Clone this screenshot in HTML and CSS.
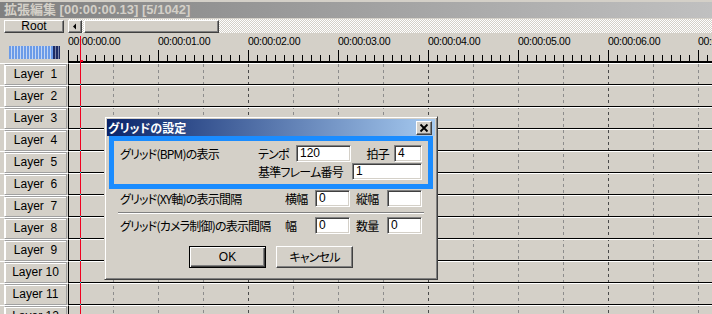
FILE: index.html
```html
<!DOCTYPE html>
<html lang="ja">
  <head>
    <meta charset="UTF-8" />
    <title>拡張編集</title>
    <link rel="stylesheet" href="styles.css">
  </head>
  <body>
    <div class="app">
      <div class="app-title">拡張編集 [00:00:00.13] [5/1042]</div>

      <!-- Root button and horizontal scroll -->
      <div class="toolbar">
        <div class="root-btn">Root</div>
        <div class="hscroll">
          <div class="arrow-btn">
            <svg width="12" height="11" viewBox="0 0 12 11"><path d="M4 5.5 L7 2.5 L7 8.5 Z" fill="#000"/></svg>
          </div>
          <div class="thumb"></div>
        </div>
      </div>

      <div class="editor">
        <!-- Layer names -->
        <div class="layers">
          <div class="zoom-box">
            <div class="meter"><span class="meter-on"></span><span class="meter-off"></span></div>
          </div>
          <div class="layer"><div class="layer-btn">Layer  1</div></div>
          <div class="layer"><div class="layer-btn">Layer  2</div></div>
          <div class="layer"><div class="layer-btn">Layer  3</div></div>
          <div class="layer"><div class="layer-btn">Layer  4</div></div>
          <div class="layer"><div class="layer-btn">Layer  5</div></div>
          <div class="layer"><div class="layer-btn">Layer  6</div></div>
          <div class="layer"><div class="layer-btn">Layer  7</div></div>
          <div class="layer"><div class="layer-btn">Layer  8</div></div>
          <div class="layer"><div class="layer-btn">Layer  9</div></div>
          <div class="layer"><div class="layer-btn">Layer 10</div></div>
          <div class="layer"><div class="layer-btn">Layer 11</div></div>
          <div class="layer"><div class="layer-btn">Layer 12</div></div>
        </div>

        <!-- Timeline -->
        <div class="timeline">
          <svg class="grid" width="644" height="281">
            <g stroke="#8c8c8c" stroke-dasharray="3 3">
              <line x1="45.5" y1="31" x2="45.5" y2="281"/>
              <line x1="90.5" y1="31" x2="90.5" y2="281"/>
              <line x1="135.5" y1="31" x2="135.5" y2="281"/>
              <line x1="225.5" y1="31" x2="225.5" y2="281"/>
              <line x1="270.5" y1="31" x2="270.5" y2="281"/>
              <line x1="315.5" y1="31" x2="315.5" y2="281"/>
              <line x1="405.5" y1="31" x2="405.5" y2="281"/>
              <line x1="450.5" y1="31" x2="450.5" y2="281"/>
              <line x1="495.5" y1="31" x2="495.5" y2="281"/>
              <line x1="585.5" y1="31" x2="585.5" y2="281"/>
              <line x1="630.5" y1="31" x2="630.5" y2="281"/>
            </g>
            <g stroke="#4a4a4a" stroke-dasharray="3 3">
              <line x1="180.5" y1="31" x2="180.5" y2="281"/>
              <line x1="360.5" y1="31" x2="360.5" y2="281"/>
              <line x1="540.5" y1="31" x2="540.5" y2="281"/>
            </g>
          </svg>

          <div class="ruler">
            <div class="ruler-labels">
              <span>00:00:00.00</span>
              <span>00:00:01.00</span>
              <span>00:00:02.00</span>
              <span>00:00:03.00</span>
              <span>00:00:04.00</span>
              <span>00:00:05.00</span>
              <span>00:00:06.00</span>
              <span>00:00:07.00</span>
            </div>
            <div class="ruler-ticks"></div>
          </div>

          <div class="track"></div>
          <div class="track"></div>
          <div class="track"></div>
          <div class="track"></div>
          <div class="track"></div>
          <div class="track"></div>
          <div class="track"></div>
          <div class="track"></div>
          <div class="track"></div>
          <div class="track"></div>
          <div class="track"></div>
          <div class="track"></div>

          <!-- current frame -->
          <svg class="cursor" width="644" height="281">
            <line x1="12.5" y1="3" x2="12.5" y2="281" stroke="#f00020"/>
            <rect x="12" y="27" width="3" height="2" fill="#f00020"/>
            <g fill="#00e0e0">
              <rect x="12" y="51" width="1" height="1"/>
              <rect x="12" y="73" width="1" height="1"/>
              <rect x="12" y="95" width="1" height="1"/>
              <rect x="12" y="117" width="1" height="1"/>
              <rect x="12" y="139" width="1" height="1"/>
              <rect x="12" y="161" width="1" height="1"/>
              <rect x="12" y="183" width="1" height="1"/>
              <rect x="12" y="205" width="1" height="1"/>
              <rect x="12" y="227" width="1" height="1"/>
              <rect x="12" y="249" width="1" height="1"/>
              <rect x="12" y="271" width="1" height="1"/>
            </g>
          </svg>
        </div>
      </div>

      <!-- Grid settings dialog -->
      <div class="dialog">
        <div class="dlg-title">
          <span class="jp">グリッドの設定</span>
          <div class="close-btn">
            <svg width="14" height="12" viewBox="0 0 14 12"><path d="M3.5 2.5 L10.5 9.5 M10.5 2.5 L3.5 9.5" stroke="#000" stroke-width="1.8"/></svg>
          </div>
        </div>

        <div class="bpm-box">
          <div class="row">
            <span class="jp lbl-main">グリッド(BPM)の表示</span>
            <span class="jp lbl-tempo">テンポ</span>
            <div class="field w-tempo">120</div>
            <span class="jp lbl-beat">拍子</span>
            <div class="field w-beat">4</div>
          </div>
          <div class="row row-2">
            <span class="lbl-main"></span>
            <span class="jp lbl-base">基準フレーム番号</span>
            <div class="field w-base">1</div>
          </div>
        </div>

        <div class="row row-pad row-xy">
          <span class="jp lbl-long">グリッド(XY軸)の表示間隔</span>
          <span class="jp lbl-small">横幅</span>
          <div class="field w-small">0</div>
          <span class="jp lbl-small2">縦幅</span>
          <div class="field w-small"></div>
        </div>

        <div class="separator"></div>

        <div class="row row-pad row-cam">
          <span class="jp lbl-long">グリッド(カメラ制御)の表示間隔</span>
          <span class="jp lbl-small">幅</span>
          <div class="field w-small">0</div>
          <span class="jp lbl-small2">数量</span>
          <div class="field w-small">0</div>
        </div>

        <div class="buttons">
          <div class="btn btn-default">OK</div>
          <div class="btn jp">キャンセル</div>
        </div>
      </div>
    </div>
  </body>
</html>
```

FILE: styles.css
```css
/* Basic styling */
* {
  margin: 0;
  padding: 0;
  box-sizing: border-box;
}
body {
  background-color: #d4d0c8;
  color: #000;
  font-family: "Liberation Sans", "Noto Sans CJK JP", sans-serif;
  font-size: 12px;
  overflow: hidden;
}
.jp {
  font-family: "Noto Sans CJK JP", sans-serif;
  font-feature-settings: "palt";
  font-size: 12px;
  letter-spacing: -0.8px;
}
.app {
  position: relative;
  width: 712px;
  height: 314px;
  overflow: hidden;
}
.app-title {
  margin-top: 2px;
  height: 16px;
  padding-left: 4px;
  background: linear-gradient(90deg, #808080, #c0c0c0);
  color: #d4d0c8;
  font-family: "Liberation Sans", "Noto Sans CJK JP", sans-serif;
  font-weight: bold;
  font-size: 13px;
  line-height: 16px;
  white-space: nowrap;
}

/* toolbar */
.toolbar {
  display: flex;
  height: 14px;
  margin-top: 1px;
}
.root-btn {
  flex: none;
  width: 60px;
  height: 13px;
  margin: 1px 0 0 4px;
  border: 1px solid;
  border-color: #fff #404040 #404040 #fff;
  box-shadow: inset -1px -1px #808080;
  text-align: center;
  line-height: 11px;
}
.hscroll {
  flex: 1;
  display: flex;
  align-items: flex-start;
  margin-left: 4px;
  padding-top: 1px;
  background: repeating-conic-gradient(#fff 0 25%, #d4d0c8 0 50%) 0 0 / 2px 2px;
}
.arrow-btn,
.thumb {
  flex: none;
  height: 13px;
  background-color: #d4d0c8;
  border: 1px solid;
  border-color: #fff #404040 #404040 #fff;
  box-shadow: inset -1px -1px #808080;
}
.arrow-btn {
  width: 14px;
  display: flex;
}
.thumb {
  width: 135px;
  margin-left: 2px;
}

/* editor */
.editor {
  display: flex;
}
.layers {
  flex: none;
  width: 68px;
}
.zoom-box {
  height: 30px;
  padding: 13px 0 0 9px;
}
.meter {
  display: flex;
  width: 51px;
  height: 13px;
}
.meter-on {
  flex: 1;
  background: repeating-linear-gradient(90deg, #6b9be8 0 2px, #c5d6f2 2px 3px);
}
.meter-off {
  width: 7px;
  background: repeating-linear-gradient(90deg, #1e2c64 0 2px, #7d86a8 2px 3px);
}
.layer {
  height: 22px;
  padding-left: 4px;
  border-top: 1px solid #fff;
}
.layer-btn {
  height: 21px;
  margin-right: 1px;
  border: 1px solid #a0a0a0;
  border-left-color: #fff;
  box-shadow: inset 1px 1px #fff;
  text-align: center;
  line-height: 19px;
  white-space: pre;
}

/* timeline */
.timeline {
  position: relative;
  flex: 1;
  min-width: 0;
  overflow: hidden;
}
.grid {
  position: absolute;
  left: 0;
  top: 0;
  z-index: 0;
}
.cursor {
  position: absolute;
  left: 0;
  top: 0;
  z-index: 2;
}
.ruler {
  position: relative;
  z-index: 1;
  height: 30px;
}
.ruler-labels {
  display: flex;
  height: 17px;
  padding-top: 2px;
  font-size: 10.5px;
  line-height: 12px;
  white-space: nowrap;
  letter-spacing: -0.3px;
}
.ruler-labels span {
  flex: none;
  width: 90px;
}
.ruler-ticks {
  height: 13px;
  border-bottom: 2px solid #000;
  background:
    repeating-linear-gradient(90deg, #000 0 1px, transparent 1px 90px),
    repeating-linear-gradient(90deg, #000 0 1px, transparent 1px 9px) 0 5px / 100% 6px no-repeat;
}
.track {
  position: relative;
  z-index: 1;
  height: 22px;
  border-top: 1px solid #fff;
  border-bottom: 1px solid #000;
  border-left: 1px solid #000;
}

/* dialog */
.dialog {
  position: absolute;
  left: 104px;
  top: 116px;
  z-index: 5;
  width: 334px;
  height: 164px;
  padding: 2px;
  background-color: #d4d0c8;
  border: 1px solid;
  border-color: #d4d0c8 #404040 #404040 #d4d0c8;
  box-shadow: inset 1px 1px #fff, inset -1px -1px #808080;
}
.dlg-title {
  display: flex;
  justify-content: space-between;
  align-items: center;
  height: 17px;
  padding: 0 3px 0 1px;
  background: linear-gradient(90deg, #0a246a, #a6caf0);
  color: #fff;
  font-weight: bold;
}
.dlg-title .jp {
  font-size: 12px;
  letter-spacing: 0;
}
.close-btn {
  width: 16px;
  height: 14px;
  background-color: #d4d0c8;
  border: 1px solid;
  border-color: #fff #404040 #404040 #fff;
  box-shadow: inset -1px -1px #808080;
  display: flex;
}
.bpm-box {
  height: 53px;
  margin: 0 2px;
  padding: 4px 0 0 6px;
  border: 5px solid #1a8cff;
}
.row {
  display: flex;
  align-items: center;
  height: 17px;
  white-space: nowrap;
}
.row-2 {
  margin-top: 1px;
}
.row-pad {
  padding-left: 13px;
}
.row-xy {
  margin-top: 1px;
}
.row-cam {
  margin-top: 3px;
}
.lbl-main {
  flex: none;
  width: 138px;
}
.lbl-tempo {
  flex: none;
  width: 38px;
}
.lbl-beat {
  flex: none;
  width: 43px;
  text-align: right;
  padding-right: 5px;
}
.lbl-base {
  flex: none;
  width: 94px;
}
.lbl-long {
  flex: none;
  width: 165px;
}
.lbl-small {
  flex: none;
  width: 30px;
}
.lbl-small2 {
  flex: none;
  width: 37px;
  padding-left: 6px;
}
.field {
  flex: none;
  height: 17px;
  padding-left: 3px;
  background-color: #fff;
  border: 1px solid;
  border-color: #808080 #fff #fff #808080;
  box-shadow: inset 1px 1px #404040, inset -1px -1px #d4d0c8;
  font-family: "Liberation Sans", sans-serif;
  font-size: 12px;
  line-height: 15px;
}
.w-tempo {
  width: 55px;
}
.w-beat {
  width: 28px;
}
.w-base {
  width: 70px;
}
.w-small {
  width: 35px;
}
.separator {
  height: 2px;
  margin: 5px 11px 0 11px;
  border-top: 1px solid #808080;
  border-bottom: 1px solid #fff;
}
.buttons {
  display: flex;
  justify-content: center;
  gap: 10px;
  margin-top: 12px;
}
.btn {
  width: 77px;
  height: 22px;
  border: 1px solid;
  border-color: #fff #404040 #404040 #fff;
  box-shadow: inset -1px -1px #808080;
  text-align: center;
  line-height: 20px;
}
.btn-default {
  border-color: #000;
  box-shadow: inset 1px 1px #fff, inset -1px -1px #404040, inset -2px -2px #808080;
}
```
